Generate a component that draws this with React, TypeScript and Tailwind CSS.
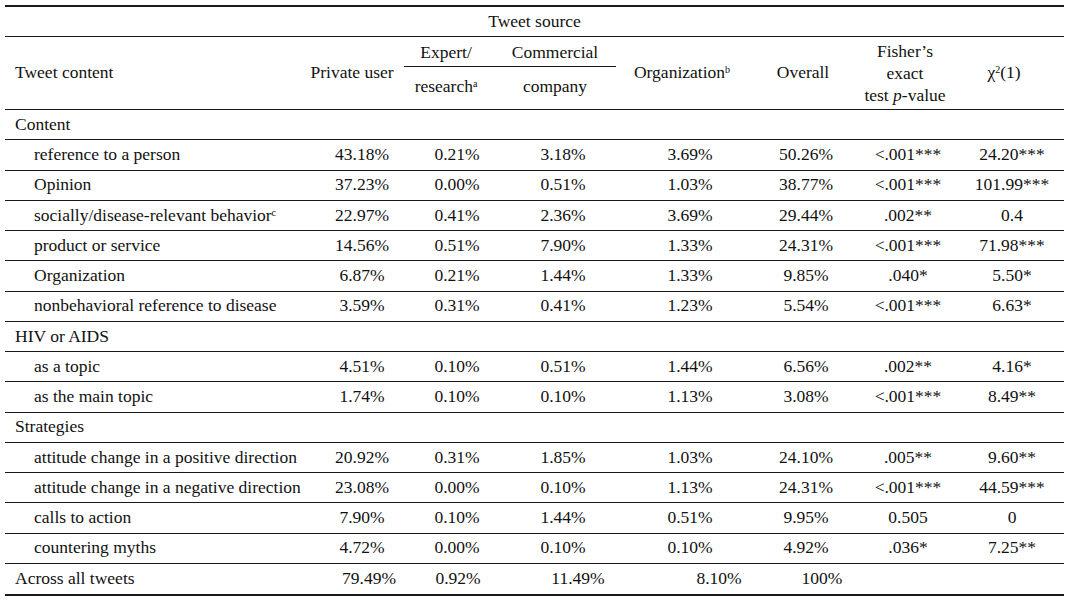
import React from "react";

type Row =
  | { g: string }
  | { label: string; sup?: string; v: string[] };

const rows: Row[] = [
  { g: "Content" },
  { label: "reference to a person", v: ["43.18%", "0.21%", "3.18%", "3.69%", "50.26%", "<.001***", "24.20***"] },
  { label: "Opinion", v: ["37.23%", "0.00%", "0.51%", "1.03%", "38.77%", "<.001***", "101.99***"] },
  { label: "socially/disease-relevant behavior", sup: "c", v: ["22.97%", "0.41%", "2.36%", "3.69%", "29.44%", ".002**", "0.4"] },
  { label: "product or service", v: ["14.56%", "0.51%", "7.90%", "1.33%", "24.31%", "<.001***", "71.98***"] },
  { label: "Organization", v: ["6.87%", "0.21%", "1.44%", "1.33%", "9.85%", ".040*", "5.50*"] },
  { label: "nonbehavioral reference to disease", v: ["3.59%", "0.31%", "0.41%", "1.23%", "5.54%", "<.001***", "6.63*"] },
  { g: "HIV or AIDS" },
  { label: "as a topic", v: ["4.51%", "0.10%", "0.51%", "1.44%", "6.56%", ".002**", "4.16*"] },
  { label: "as the main topic", v: ["1.74%", "0.10%", "0.10%", "1.13%", "3.08%", "<.001***", "8.49**"] },
  { g: "Strategies" },
  { label: "attitude change in a positive direction", v: ["20.92%", "0.31%", "1.85%", "1.03%", "24.10%", ".005**", "9.60**"] },
  { label: "attitude change in a negative direction", v: ["23.08%", "0.00%", "0.10%", "1.13%", "24.31%", "<.001***", "44.59***"] },
  { label: "calls to action", v: ["7.90%", "0.10%", "1.44%", "0.51%", "9.95%", "0.505", "0"] },
  { label: "countering myths", v: ["4.72%", "0.00%", "0.10%", "0.10%", "4.92%", ".036*", "7.25**"] },
];

const grid =
  "grid grid-cols-[315px_84px_106px_106px_148px_84px_120px_88px_8px]";

export default function App() {
  return (
    <div className="w-[1072px] h-[600px] bg-white pt-[5px] pl-[5px] text-[#111111] text-[17.5px] leading-none font-['Liberation_Serif','Times_New_Roman',serif]">
      <div className="w-[1059px] border-t-2 border-b-2 border-[#1a1a1a]">
        {/* Tweet source */}
        <div className="h-[30px] border-b border-[#1a1a1a] flex items-center justify-center">
          Tweet source
        </div>
        {/* Column headers */}
        <div className={`${grid} h-[73px] border-b border-[#1a1a1a]`}>
          <div className="flex items-center pl-[10px]">Tweet content</div>
          <div className="flex items-center justify-center pr-[20px] whitespace-nowrap">Private user</div>
          <div className="col-span-2 flex flex-col">
            <div className="h-[30px] flex border-b border-[#1a1a1a]">
              <div className="w-[106px] flex items-center justify-center pr-[22px] pt-[2px]">Expert/</div>
              <div className="w-[106px] flex items-center justify-center pr-[16px] pt-[2px]">Commercial</div>
            </div>
            <div className="flex-1 flex">
              <div className="w-[106px] flex items-center justify-center pr-[22px] pb-[2px]">
                <span>
                  research<sup className="text-[10px]">a</sup>
                </span>
              </div>
              <div className="w-[106px] flex items-center justify-center pr-[16px] pb-[2px]">company</div>
            </div>
          </div>
          <div className="flex items-center justify-center pr-[16px]">
            <span>
              Organization<sup className="text-[10px]">b</sup>
            </span>
          </div>
          <div className="flex items-center justify-center pr-[6px]">Overall</div>
          <div className="flex flex-col items-center justify-center pr-[6px] leading-[22px]">
            <span>Fisher’s</span>
            <span>exact</span>
            <span>
              test <i>p</i>-value
            </span>
          </div>
          <div className="flex items-center justify-center pr-[16px]">
            <span>
              χ<sup className="text-[10px]">2</sup>(1)
            </span>
          </div>
          <div />
        </div>
        {/* Body */}
        {rows.map((r, i) =>
          "g" in r ? (
            <div key={i} className="h-[30.25px] border-b border-[#1a1a1a] flex items-center pl-[10px]">
              {r.g}
            </div>
          ) : (
            <div key={i} className={`${grid} h-[30.25px] border-b border-[#1a1a1a] items-center`}>
              <div className="pl-[29px] whitespace-nowrap">
                {r.label}
                {r.sup && <sup className="text-[10px]">{r.sup}</sup>}
              </div>
              {r.v.map((x, j) => (
                <div key={j} className="text-center whitespace-nowrap">
                  {x}
                </div>
              ))}
              <div />
            </div>
          )
        )}
        <div className={`${grid} h-[30.25px] items-center`}>
          <div className="pl-[10px] whitespace-nowrap">Across all tweets</div>
          <div className="text-center pl-[14px]">79.49%</div>
          <div className="text-center pl-[2px]">0.92%</div>
          <div className="text-center pl-[30px]">11.49%</div>
          <div className="text-center pl-[58px]">8.10%</div>
          <div className="text-center pl-[32px]">100%</div>
          <div />
          <div />
          <div />
        </div>
      </div>
    </div>
  );
}
